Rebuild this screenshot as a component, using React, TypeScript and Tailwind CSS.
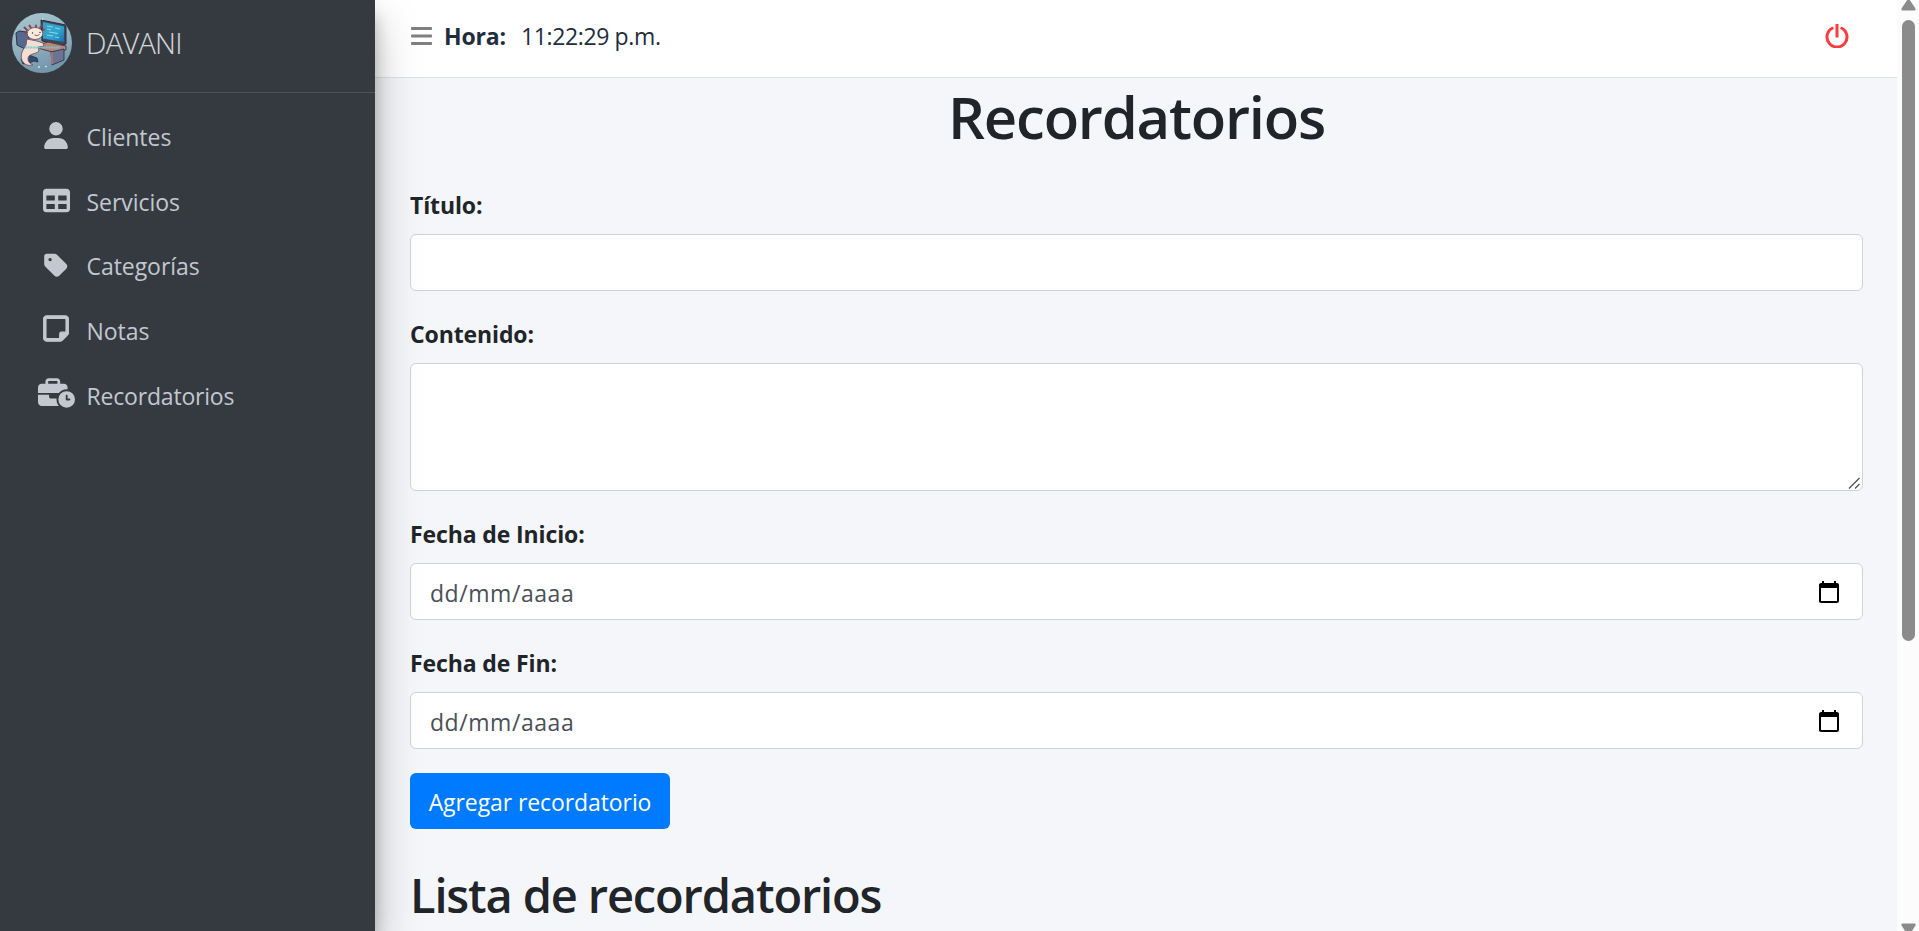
import type { ReactNode } from "react";
import { FaBusinessTime, FaRegNoteSticky, FaTable, FaTag, FaUser } from "react-icons/fa6";

function Avatar() {
  return (
    <svg viewBox="0 0 60 60" className="h-[60px] w-[60px] shrink-0 rounded-full">
      <defs>
        <linearGradient id="sky" x1="0" y1="0" x2="0.3" y2="1">
          <stop offset="0" stopColor="#a9c6cd" />
          <stop offset="0.6" stopColor="#8fb0bd" />
          <stop offset="1" stopColor="#7397ad" />
        </linearGradient>
        <linearGradient id="screen" x1="0" y1="0" x2="1" y2="1">
          <stop offset="0" stopColor="#3f9cc0" />
          <stop offset="0.6" stopColor="#2fa3cf" />
          <stop offset="1" stopColor="#1c6fa6" />
        </linearGradient>
      </defs>
      <rect width="60" height="60" fill="url(#sky)" />
      <path d="M4 20l3-2 8 1 2 3v12l-4 2-8-4z" fill="#56688c" stroke="#2c3550" strokeWidth="1" />
      <path d="M9 46l8-4 8 3 1 4-4-1-5 2-6 1z" fill="#394a70" stroke="#27304a" strokeWidth="0.8" />
      <path d="M29 7l25 5v19l-4 1-20-4z" fill="#3d4860" stroke="#2b2f3d" strokeWidth="1" />
      <path d="M31 9l21 4.500v15.500l-21-3.500z" fill="url(#screen)" />
      <path d="M35 13l6 1M43 15l5 1M35 16l4 .7M37 19l9 1.500M35 22l6 1M43 24l4 .6" stroke="#8fe0e6" strokeWidth="0.9" />
      <path d="M39 28l6 1v3l-6-1z" fill="#434558" />
      <path d="M26 32l10-3 18 4v4l-14 2-14-4z" fill="#b98478" stroke="#513b45" strokeWidth="1" />
      <path d="M39 39l13-3v11l-12 5z" fill="#6a7594" stroke="#3b3c50" strokeWidth="1" />
      <path d="M39 39l2 .5v12l-2-.8z" fill="#a57370" />
      <path d="M15 17l-2.500-2.500M16 20l-3.500-.5M19 15l-1.500-2.500M24 14v-1.500M28 15l1.500-2.500M30 18l2-1.500" stroke="#8b4351" strokeWidth="1.900" strokeLinecap="round" />
      <path
        d="M15 26c-1 3 0 5-2 8-4 5-5 11-2 15 2 3 6 4 10 3-5-2-6-6-4-9 3-3 8-2 10-5l-1-4 6-1-1-3-6-2z"
        fill="#f2dfd2"
        stroke="#76535a"
        strokeWidth="0.9"
      />
      <ellipse cx="23" cy="20.500" rx="7.800" ry="6" fill="#f7e9dd" stroke="#76535a" strokeWidth="0.9" />
      <path d="M22.500 22q3 1.500 5-.5" fill="none" stroke="#6b4650" strokeWidth="0.8" />
      <circle cx="20.500" cy="20" r="0.7" fill="#3c2a33" />
      <circle cx="28" cy="19.500" r="0.7" fill="#3c2a33" />
      <path d="M13 34.500h35" stroke="#68cfd8" strokeWidth="2" strokeDasharray="2 .6" opacity="0.85" />
      <path d="M26 54h2M33 53l2 1M30 6h1" stroke="#d3e6ec" strokeWidth="1.300" />
    </svg>
  );
}

function NavItem({ icon, label }: { icon: ReactNode; label: ReactNode }) {
  return (
    <li className="flex h-[60px] items-center">
      <span className="flex w-[37px] shrink-0 justify-center">{icon}</span>
      <span className="mt-[1.5px] ml-3 text-[23px] leading-9 tracking-[-0.05px]">{label}</span>
    </li>
  );
}

function Sidebar() {
  return (
    <aside className="relative z-10 h-full w-[375px] shrink-0 bg-[#343a40] text-[#c2c7d0] shadow-[0_21px_42px_rgba(0,0,0,0.25),0_15px_15px_rgba(0,0,0,0.22)]">
      <div className="flex h-[93px] items-start border-b border-[#4b545c] pt-[13px] pl-3">
        <Avatar />
        <span className="mt-[7px] ml-[14px] text-[29px] leading-[45px] font-light tracking-[-0.75px] text-white/80">DAVANI</span>
      </div>
      <ul className="flex flex-col gap-[4.8px] pt-[13px] pl-[37.5px]">
        <NavItem icon={<FaUser className="mb-0.5 h-[27px] w-[24px]" />} label="Clientes" />
        <NavItem icon={<FaTable className="mb-px h-[27px] w-[27px]" />} label="Servicios" />
        <NavItem icon={<FaTag className="mb-px h-[27px] w-[24px]" />} label="Categorías" />
        <NavItem icon={<FaRegNoteSticky className="mb-1 h-[29px] w-[26px]" stroke="currentColor" strokeWidth="18" />} label="Notas" />
        <NavItem icon={<FaBusinessTime className="mb-1 h-[30px] w-[37px]" />} label={<span className="tracking-[-0.19px]">Recordatorios</span>} />
      </ul>
    </aside>
  );
}

function Header() {
  return (
    <header className="flex h-[78px] shrink-0 items-start border-b border-[#dee2e6] bg-white pr-12 pl-9">
      <svg viewBox="0 0 21 18" className="mt-[27px] h-[18px] w-[21px]" fill="#808080">
        <rect width="21" height="3" rx="0.8" />
        <rect y="7.500" width="21" height="3" rx="0.8" />
        <rect y="15" width="21" height="3" rx="0.8" />
      </svg>
      <p className="mt-[18px] ml-3 text-[23px] leading-9 text-[#1f2d3d]">
        <strong className="tracking-[-0.17px]">Hora:</strong>
        <span className="ml-[15px] tracking-[-0.36px]">11:22:29 p.m.</span>
      </p>
      <svg viewBox="0 0 24 24" className="mt-[23.5px] ml-auto h-6 w-6" fill="none" stroke="#ff3b3f" strokeWidth="3">
        <path d="M7.200 4.200A10 10 0 1 0 16.800 4.200" strokeLinecap="round" />
        <path d="M12 0v13.500" />
      </svg>
    </header>
  );
}

const labelClass = "mb-[11px] block pt-px text-[23px] leading-9 font-bold tracking-[-0.12px]";
const fieldClass = "block w-full rounded-md border border-[#ced4da] bg-white px-[18px] text-[23px] text-[#495057] outline-none";

function DateField({ id, label }: { id: string; label: string }) {
  return (
    <div className="mb-6">
      <label htmlFor={id} className={labelClass}>{label}</label>
      <div className="flex h-[57px] items-center rounded-md border border-[#ced4da] bg-white pr-[21px] pl-[19px]">
        <input
          id={id}
          placeholder="dd/mm/aaaa"
          className="min-w-0 flex-1 pt-[3px] text-[23px] leading-9 tracking-[0.55px] text-[#495057] outline-none placeholder:text-[#495057]"
        />
        <svg viewBox="0 0 24 24" className="h-6 w-6" fill="#000">
          <path d="M20 3h-1V1h-2v2H7V1H5v2H4c-1.100 0-2 .9-2 2v16c0 1.100.9 2 2 2h16c1.100 0 2-.9 2-2V5c0-1.100-.9-2-2-2zm0 18H4V8h16v13z" />
        </svg>
      </div>
    </div>
  );
}

function Scrollbar() {
  return (
    <div className="relative z-20 flex h-full w-[22px] shrink-0 flex-col items-center justify-between overflow-hidden bg-[#fcfcfc]">
      <svg viewBox="0 0 15 11" className="h-[11px] w-[15px] shrink-0" fill="#8b8b8b">
        <path d="M6.200 0h2.600l5.500 8.300q1 2.200-1 2.200H1.700q-2 0-1-2.200z" />
      </svg>
      <div className="mt-[9px] ml-px h-[621px] w-[13px] shrink-0 rounded-full bg-[#8b8b8b]" />
      <div className="flex-1" />
      <svg viewBox="0 0 15 8" className="h-2 w-[15px] shrink-0" fill="#8b8b8b">
        <path d="M1.700.5h11.600q2 0 1 2.200L11 8H4L.7 2.700Q-.3.500 1.700.5z" />
      </svg>
    </div>
  );
}

export default function App() {
  return (
    <div className="flex h-[931px] w-full overflow-hidden bg-[#f4f6f9] font-['Open_Sans','Noto_Sans',sans-serif] text-[#212529]">
      <Sidebar />
      <div className="flex h-full min-w-0 flex-1 flex-col overflow-hidden">
        <Header />
        <main className="pr-[34px] pl-[35px]">
          <h1 className="mt-[3px] mb-[33px] text-center text-[58px] leading-[72px] font-semibold tracking-[-1.2px]">Recordatorios</h1>
          <form>
            <div className="mb-6">
              <label htmlFor="titulo" className={labelClass}>Título:</label>
              <input id="titulo" className={`${fieldClass} h-[57px]`} />
            </div>
            <div className="mb-6">
              <label htmlFor="contenido" className={labelClass}>Contenido:</label>
              <div className="relative">
                <textarea id="contenido" className={`${fieldClass} h-32 resize-none py-2`} />
                <svg viewBox="0 0 12 12" className="absolute right-[3px] bottom-0.5 h-3 w-3" stroke="#555" strokeWidth="1.400">
                  <path d="M1 11.500L11.500 1M7 11.500L11.500 7" />
                </svg>
              </div>
            </div>
            <DateField id="inicio" label="Fecha de Inicio:" />
            <DateField id="fin" label="Fecha de Fin:" />
            <button type="button" className="block h-14 w-[260px] rounded-md bg-[#007bff] pt-0.5 text-[23px] leading-9 tracking-[-0.09px] text-white">
              Agregar recordatorio
            </button>
          </form>
          <h2 className="mt-[37px] text-[47px] leading-[58px] font-semibold tracking-[-1.15px] whitespace-nowrap">Lista de recordatorios</h2>
        </main>
      </div>
      <Scrollbar />
    </div>
  );
}
